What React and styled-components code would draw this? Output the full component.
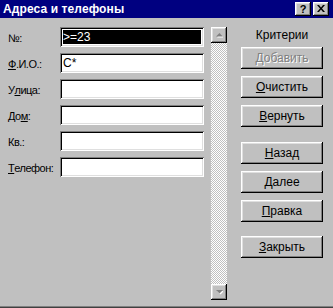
import React from 'react';
import styled, { createGlobalStyle } from 'styled-components';

const GlobalStyle = createGlobalStyle`
	html, body {
		margin: 0;
		padding: 0;
		background: #c0c0c0;
	}
	* {
		box-sizing: border-box;
	}
`;

const raised = `
	box-shadow: inset -1px -1px #000, inset 1px 1px #fff, inset -2px -2px #808080, inset 2px 2px #dfdfdf;
`;

const sunken = 'inset 1px 1px #808080, inset -1px -1px #fff, inset 2px 2px #000, inset -2px -2px #dfdfdf';

const Window = styled.div`
	width: 333px;
	height: 308px;
	background: #c0c0c0;
	display: flex;
	flex-direction: column;
	font-family: "Liberation Sans", Arial, sans-serif;
	font-size: 11px;
	color: #000;
	box-shadow: inset 0 -1px #404040, inset 0 -2px #808080;
`;

const TitleBar = styled.div`
	height: 18px;
	background: #000080;
	display: flex;
	align-items: center;
	padding: 0 4px 0 3px;
`;

const Title = styled.div`
	flex: 1;
	color: #fff;
	font-weight: bold;
	font-size: 12px;
	letter-spacing: 0.1px;
`;

const TitleButton = styled.div`
	width: 16px;
	height: 14px;
	margin-left: ${props => props.gap || 0}px;
	background: #c0c0c0;
	${raised}
	display: flex;
	align-items: center;
	justify-content: center;
	font-weight: bold;
	font-size: 11px;
	line-height: 14px;
	padding-bottom: 1px;
`;

const Content = styled.div`
	display: flex;
	flex-direction: row;
	padding: 9px 0 0 8px;
`;

const FieldGrid = styled.div`
	display: grid;
	grid-template-columns: 52px 144px;
	grid-auto-rows: 20px;
	row-gap: 6px;
	align-self: flex-start;
`;

const Label = styled.label`
	display: flex;
	align-items: center;
	white-space: nowrap;
	padding-top: 1px;
	font-size: 11px;
	letter-spacing: -0.5px;
`;

const Field = styled.div`
	background: ${props => props.selected ? '#000' : '#fff'};
	color: ${props => props.selected ? '#fff' : '#000'};
	box-shadow: ${props => props.selected
		? `${sunken}, inset 3px 3px #fff, inset -3px -3px #fff`
		: sunken};
	padding: 0 0 0 3px;
	display: flex;
	align-items: center;
	font-size: 12px;
`;

const ScrollBar = styled.div`
	margin-left: 7px;
	width: 16px;
	height: 273px;
	display: flex;
	flex-direction: column;
	background-color: #c0c0c0;
	background-image: conic-gradient(#fff 25%, #c0c0c0 0 50%, #fff 0 75%, #c0c0c0 0);
	background-size: 2px 2px;
`;

const ArrowButton = styled.div`
	width: 16px;
	height: 16px;
	background: #c0c0c0;
	${raised}
	display: flex;
	align-items: center;
	justify-content: center;
`;

const Track = styled.div`
	flex: 1;
`;

const Side = styled.div`
	margin-left: 14px;
	width: 82px;
	display: flex;
	flex-direction: column;
`;

const Caption = styled.div`
	text-align: center;
	line-height: 13px;
	margin: 2px 0 5px;
	font-size: 12px;
`;

const Button = styled.div`
	height: 22px;
	margin-top: ${props => props.gap || 0}px;
	background: #c0c0c0;
	${raised}
	display: flex;
	align-items: center;
	justify-content: center;
	font-size: 12px;
	color: ${props => props.disabled ? '#808080' : '#000'};
	text-shadow: ${props => props.disabled ? '1px 1px #fff' : 'none'};
`;

const Arrow = ({ down }) => (
	<svg width="7" height="5" viewBox="0 0 7 5">
		<polygon
			points={down ? '1,1 8,1 4.5,4.5' : '1,4.5 8,4.5 4.5,1'}
			fill="#fff"
		/>
		<polygon
			points={down ? '0,0 7,0 3.5,3.5' : '0,3.5 7,3.5 3.5,0'}
			fill="#808080"
		/>
	</svg>
);

const fields = [
	{ label: <>№:</>, value: '>=23', selected: true },
	{ label: <><u>Ф</u>.И.О.:</>, value: 'С*' },
	{ label: <>У<u>л</u>ица:</>, value: '' },
	{ label: <>До<u>м</u>:</>, value: '' },
	{ label: <>Кв.:</>, value: '' },
	{ label: <><u>Т</u>елефон:</>, value: '' },
];

const buttons = [
	{ text: <>Добавить</>, gap: 0, disabled: true },
	{ text: <><u>О</u>чистить</>, gap: 7 },
	{ text: <><u>В</u>ернуть</>, gap: 7 },
	{ text: <><u>Н</u>азад</>, gap: 15 },
	{ text: <><u>Д</u>алее</>, gap: 7 },
	{ text: <><u>П</u>равка</>, gap: 7 },
	{ text: <><u>З</u>акрыть</>, gap: 14 },
];

export default function App() {
	return (
		<>
			<GlobalStyle />
			<Window>
				<TitleBar>
					<Title>Адреса и телефоны</Title>
					<TitleButton>?</TitleButton>
					<TitleButton gap={2}>
						<svg width="8" height="7" viewBox="0 0 8 7">
							<path d="M0 0h2l2 2.5L6 0h2L5 3.5 8 7H6L4 4.5 2 7H0l3-3.5z" fill="#000" />
						</svg>
					</TitleButton>
				</TitleBar>
				<Content>
					<FieldGrid>
						{fields.map((f, i) => (
							<React.Fragment key={i}>
								<Label>{f.label}</Label>
								<Field selected={f.selected}>{f.value}</Field>
							</React.Fragment>
						))}
					</FieldGrid>
					<ScrollBar>
						<ArrowButton><Arrow /></ArrowButton>
						<Track />
						<ArrowButton><Arrow down /></ArrowButton>
					</ScrollBar>
					<Side>
						<Caption>Критерии</Caption>
						{buttons.map((b, i) => (
							<Button key={i} gap={b.gap} disabled={b.disabled}>{b.text}</Button>
						))}
					</Side>
				</Content>
			</Window>
		</>
	);
}
